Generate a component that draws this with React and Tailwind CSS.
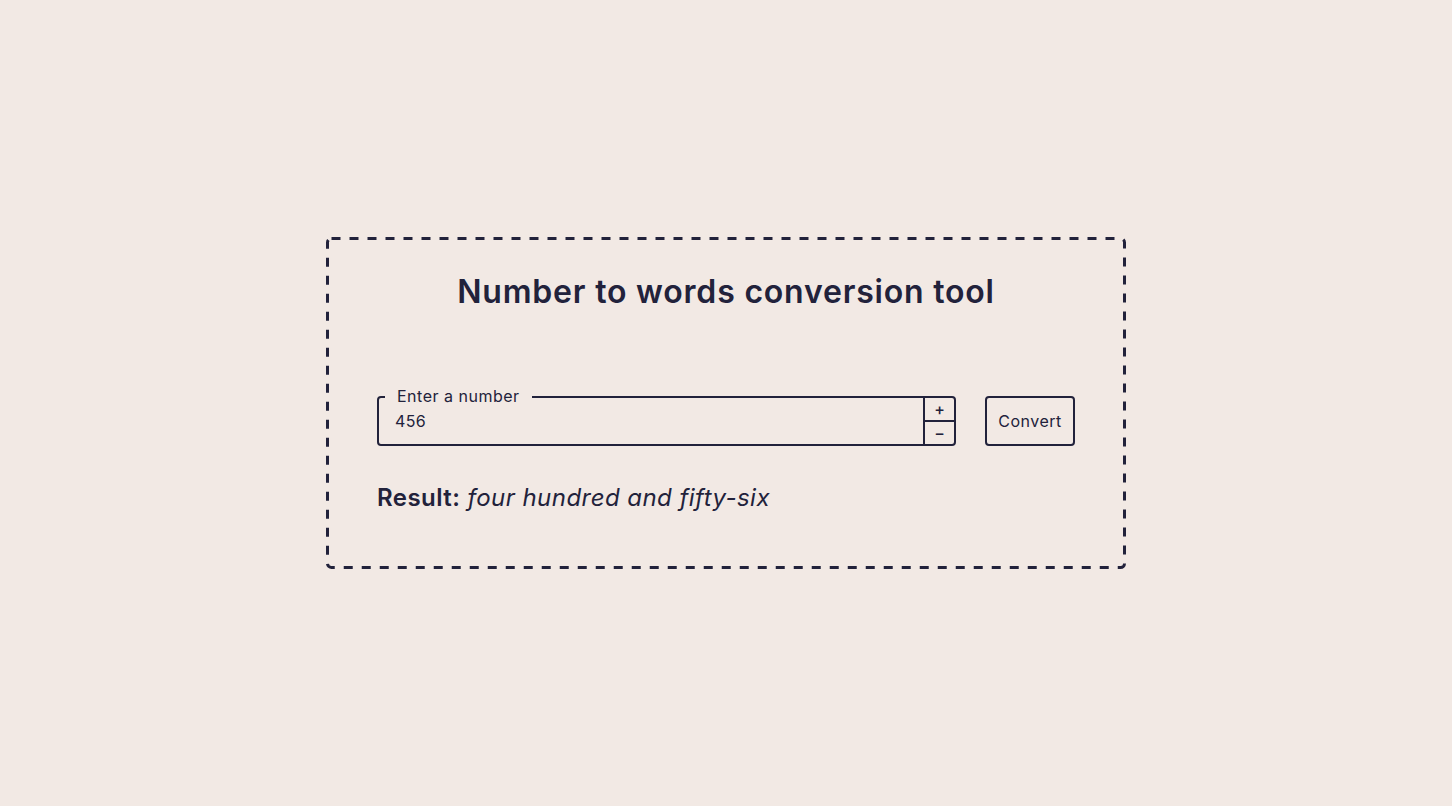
export default function App() {
    return (
        <div className="min-h-screen w-full bg-[#f2e9e4] text-[#22223b] flex items-center justify-center font-['Inter','Liberation_Sans',sans-serif]">
            <div className="relative w-[800px] h-[332px] px-[51px] pt-[35px]">
                {/* dashed frame: long dashes like the reference */}
                <svg
                    className="absolute inset-0 pointer-events-none"
                    width="800"
                    height="332"
                    viewBox="0 0 800 332"
                >
                    <rect
                        x="1.5"
                        y="1.5"
                        width="797"
                        height="329"
                        rx="4"
                        fill="none"
                        stroke="#22223b"
                        strokeWidth="3"
                        strokeDasharray="9 9"
                    />
                </svg>

                <h1 className="text-[32px] leading-[40px] font-semibold text-center tracking-[0.8px]">
                    Number to words conversion tool
                </h1>

                <div className="mt-[84px] flex gap-[29px]">
                    <div className="relative flex-1 h-[50px] border-2 border-[#22223b] rounded-[4px] flex">
                        <span className="absolute -top-[12px] left-[6px] px-3 bg-[#f2e9e4] text-[16px] leading-5 tracking-[0.5px]">
                            Enter a number
                        </span>
                        <div className="flex-1 flex items-center pl-[16px] text-base tracking-[0.3px]">
                            456
                        </div>
                        <div className="w-[31px] border-l-2 border-[#22223b] flex flex-col">
                            <button className="flex-1 flex items-center justify-center border-b-2 border-[#22223b] text-[16px] font-medium leading-none">
                                +
                            </button>
                            <button className="flex-1 flex items-center justify-center text-[16px] font-medium leading-none">
                                −
                            </button>
                        </div>
                    </div>
                    <button className="w-[90px] h-[50px] border-2 border-[#22223b] rounded-[4px] text-base tracking-[0.5px]">
                        Convert
                    </button>
                </div>

                <p className="mt-[36px] text-[24px] leading-8 tracking-[0.45px]">
                    <strong className="font-semibold">Result:</strong>{" "}
                    <em className="font-normal">four hundred and fifty-six</em>
                </p>
            </div>
        </div>
    );
}
